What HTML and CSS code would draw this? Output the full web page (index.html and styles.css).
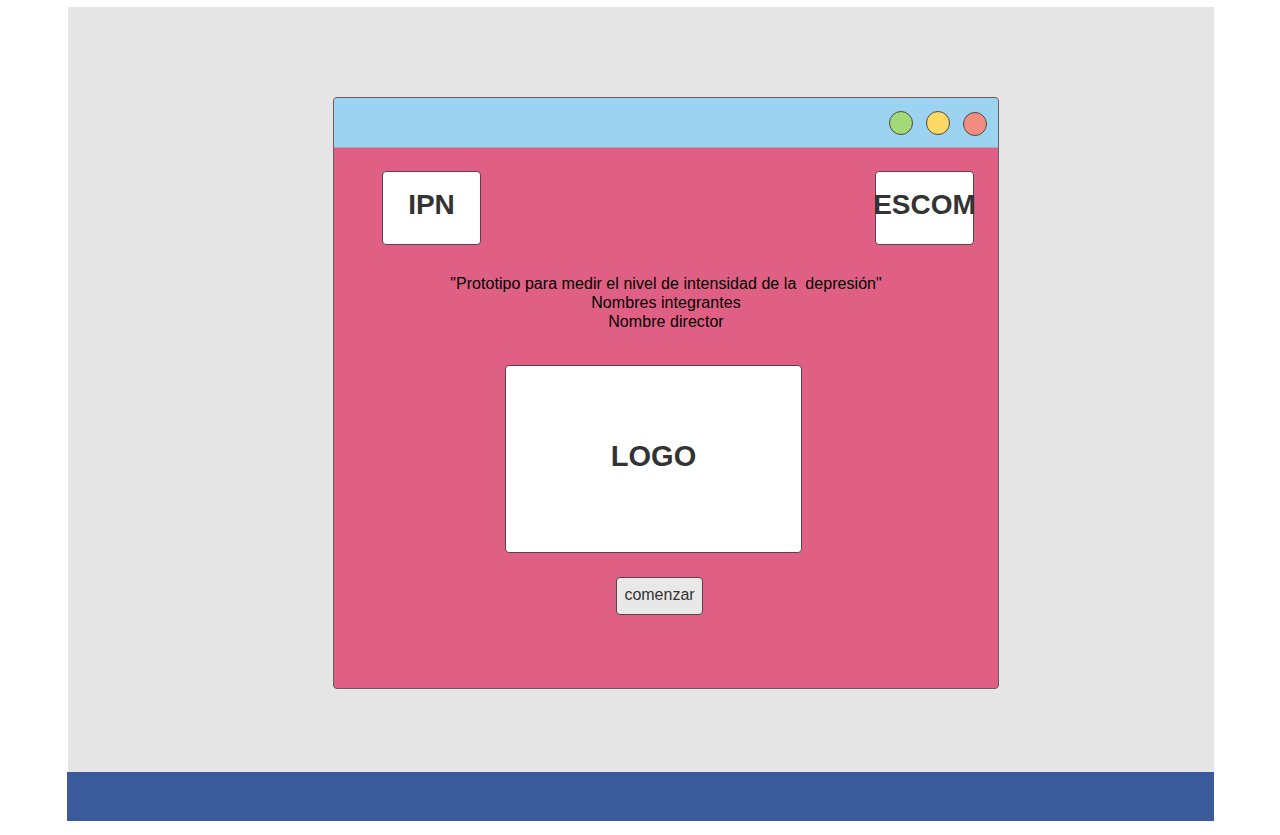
FILE: index.html
```html
<!DOCTYPE html>
<html lang="es">
<head>
<meta charset="utf-8">
<title>Prototipo</title>
<link rel="stylesheet" href="styles.css">
</head>
<body>
<div class="page">
  <div class="stage">
    <div class="window">
      <div class="titlebar">
        <span class="dot dot-green"></span>
        <span class="dot dot-yellow"></span>
        <span class="dot dot-red"></span>
      </div>
      <div class="content">
        <div class="badges">
          <div class="badge">IPN</div>
          <div class="badge">ESCOM</div>
        </div>
        <div class="info">
          <p>"Prototipo para medir el nivel de intensidad de la&nbsp; depresión"</p>
          <p>Nombres integrantes</p>
          <p>Nombre director</p>
        </div>
        <div class="logo">LOGO</div>
        <button class="start">comenzar</button>
      </div>
    </div>
  </div>
  <div class="footer"></div>
</div>
</body>
</html>
```
FILE: styles.css
```css
html, body {
  margin: 0;
  padding: 0;
  background: #ffffff;
  font-family: "Liberation Sans", Arial, sans-serif;
}

.page {
  padding: 7px 0 0 67px;
  width: 1147px;
}

.stage {
  background: #e5e5e5;
  height: 765px;
  margin-left: 1px;
  padding: 90px 0 0 265px;
  box-sizing: border-box;
}

.footer {
  background: #3a5a9c;
  height: 49px;
}

.window {
  width: 666px;
  height: 592px;
  box-sizing: border-box;
  border: 1px solid #6b5a60;
  border-radius: 4px;
  background: #e06085;
  overflow: hidden;
  display: flex;
  flex-direction: column;
}

.titlebar {
  height: 49px;
  background: #9bd3f0;
  border-bottom: 1px solid #b0a5b0;
  display: flex;
  align-items: center;
  justify-content: flex-end;
  gap: 13px;
  padding-right: 11px;
  flex-shrink: 0;
}

.dot {
  width: 24px;
  height: 24px;
  box-sizing: border-box;
  border-radius: 50%;
  border: 1px solid #4a4a4a;
}
.dot-green { background: #a3d977; }
.dot-yellow { background: #ffd966; }
.dot-red { background: #f48d7f; margin-top: 2px; }

.content {
  display: flex;
  flex-direction: column;
  align-items: flex-start;
  padding-top: 23px;
}

.badges {
  display: flex;
  justify-content: space-between;
  align-self: stretch;
  padding: 0 24px 0 48px;
}

.badge {
  width: 99px;
  height: 74px;
  box-sizing: border-box;
  background: #ffffff;
  border: 1px solid #5a4048;
  border-radius: 4px;
  display: flex;
  justify-content: center;
  padding-top: 17px;
  font-size: 28px;
  font-weight: bold;
  color: #333333;
  white-space: nowrap;
  line-height: 31px;
}

.info {
  align-self: stretch;
  text-align: center;
  margin-top: 29px;
  font-size: 16px;
  line-height: 19px;
  color: #000000;
  letter-spacing: 0.05px;
}
.info p { margin: 0; }

.logo {
  margin: 34px 0 0 171px;
  width: 297px;
  height: 188px;
  box-sizing: border-box;
  background: #ffffff;
  border: 1px solid #5a4048;
  border-radius: 4px;
  display: flex;
  align-items: center;
  justify-content: center;
  padding-bottom: 6px;
  font-size: 29px;
  font-weight: bold;
  color: #333333;
}

.start {
  margin: 24px 0 0 282px;
  width: 87px;
  height: 38px;
  box-sizing: border-box;
  background: #e8e8e8;
  border: 1px solid #5a4048;
  border-radius: 4px;
  font-family: "Liberation Sans", Arial, sans-serif;
  font-size: 16px;
  color: #333333;
  padding: 0 0 3px 0;
  display: flex;
  justify-content: center;
  align-items: center;
}
```
